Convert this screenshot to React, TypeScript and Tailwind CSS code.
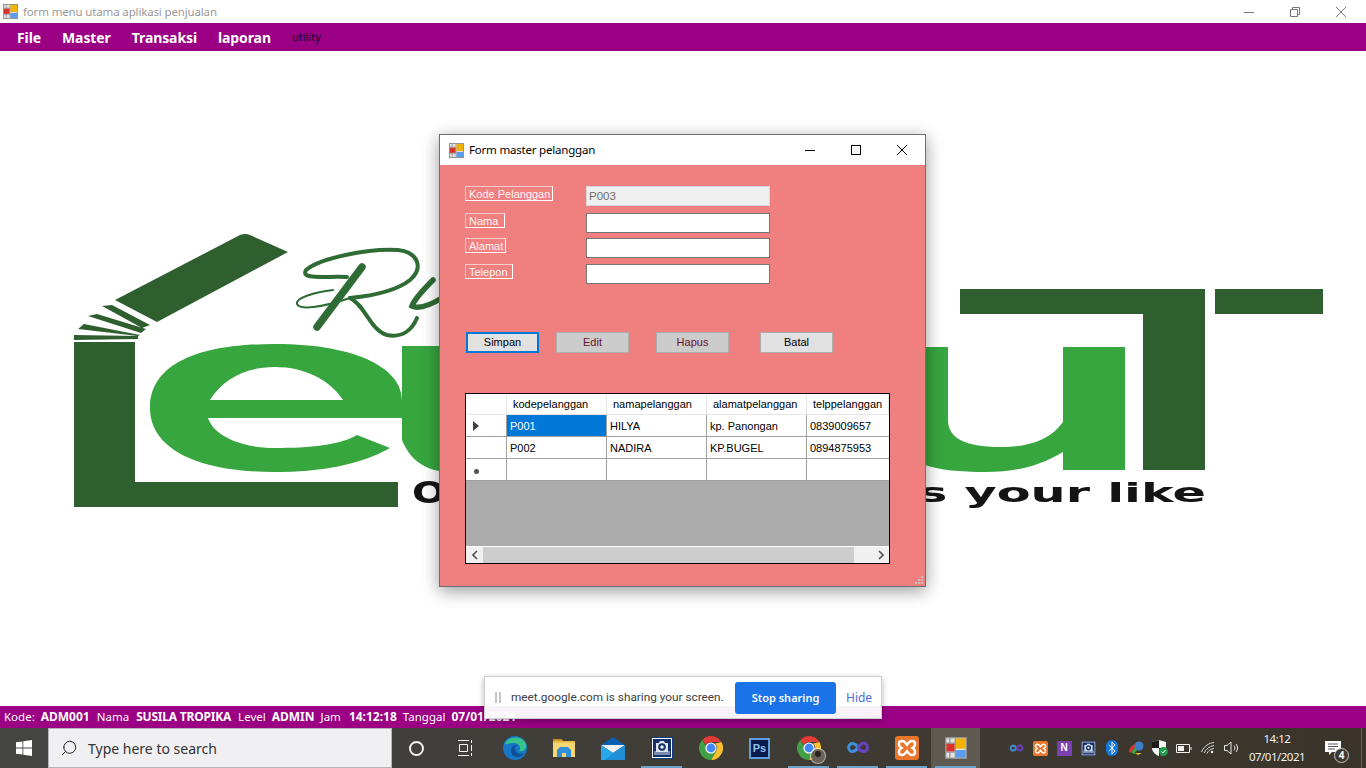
import { Search } from 'lucide-react'

const ui = "font-['Noto_Sans',sans-serif]"
const ms = "font-['Liberation_Sans',sans-serif]"

function AppIcon({ size = 16 }: { size?: number }) {
  return (
    <svg width={size} height={size} viewBox="0 0 16 16">
      <rect x="0.5" y="0.5" width="15" height="15" fill="#e4e4e4" stroke="#8f8f8f" />
      <path d="M0 4.500h7.500M0 11h7.500M3.500 0v4.500M3.500 11v5M7.500 0v16" stroke="#9a9a9a" />
      <rect x="8" y="1" width="7" height="7.500" fill="#f0b400" />
      <rect x="8" y="9.500" width="7" height="5.500" fill="#5b9cec" />
      <rect x="1" y="5" width="6" height="5.500" fill="#d8322a" />
    </svg>
  )
}

function WinButtons({ color, className, restore }: { color: string; className?: string; restore?: boolean }) {
  return (
    <div className={`flex h-full ${className ?? ''}`}>
      <div className="flex w-[46px] items-center justify-center">
        <svg width="10" height="10" fill="none" stroke={color}><path d="M0 5.500h10" /></svg>
      </div>
      <div className="flex w-[46px] items-center justify-center">
        <svg width="10" height="10" fill="none" stroke={color}>
          {restore ? (
            <path d="M.5 2.500h7v7h-7zM2.500 2.500v-2h7v7h-2" />
          ) : (
            <rect x="0.5" y="0.5" width="9" height="9" />
          )}
        </svg>
      </div>
      <div className="flex w-[46px] items-center justify-center">
        <svg width="10" height="10" fill="none" stroke={color}><path d="M0 0l10 10M10 0L0 10" /></svg>
      </div>
    </div>
  )
}

function LogoBackdrop() {
  const dark = '#2f5f2f'
  const light = '#37a63f'
  return (
    <svg className="absolute inset-0 blur-[0.6px]" width="1366" height="655" viewBox="0 51 1366 655">
      {/* roof */}
      <path d="M115 300L240 235Q245 233 250 235L288 252L157 322Z" fill={dark} />
      <path d="M102 306L112 305L150 325L142 328ZM88 316L97 314L146 329L141 333ZM78 329L84 324L140 335L138 336ZM74 335L138 336V339L74 340Z" fill={dark} />
      {/* L */}
      <path d="M74 342H135V482H398V507H74Z" fill={dark} />
      {/* e */}
      <path
        fillRule="evenodd"
        fill={light}
        d="M150 408C150 368 190 344 275 344C360 344 402 370 402 400V418H208C215 438 245 448 275 448C310 448 340 445 357 435L390 448C360 465 320 472 275 472C190 472 150 445 150 408ZM210 400H343C330 380 305 367 275 367C245 367 222 380 210 400Z"
      />
      <path d="M402 346H445V472C425 470 410 460 402 440Z" fill={light} />
      {/* script */}
      <g fill="none" stroke="#2f6b35" strokeLinecap="round">
        <path d="M347 277C325 276 300 280 306 270C320 258 370 248 398 250C418 252 424 268 410 280C395 292 370 296 350 298" strokeWidth="4" />
        <path d="M362 267L317 327" strokeWidth="7.500" />
        <path d="M350 298C365 305 370 330 387 335C402 338 412 330 417 318" strokeWidth="4" />
        <path d="M333 290C315 292 295 298 297 304C300 310 320 308 350 298" strokeWidth="2" />
        <path d="M433 280C425 288 415 298 412 306C420 310 432 304 442 298" strokeWidth="5.500" />
      </g>
      {/* right side */}
      <path d="M925 347H948V420C948 438 965 447 1000 447C1030 447 1050 440 1063 422V347H1125V470H1063V452C1040 466 1015 472 985 472C960 472 940 470 925 465Z" fill={light} />
      <path d="M960 289H1205V470H1143V314H960ZM1215 289H1323V314H1215Z" fill={dark} />
      <text x="412" y="503" fontFamily="DejaVu Sans" fontWeight="700" fontSize="31" fill="#141414" textLength="34" lengthAdjust="spacingAndGlyphs">O</text>
      <text x="918" y="502" fontFamily="DejaVu Sans" fontWeight="700" fontSize="27" fill="#141414" textLength="288" lengthAdjust="spacingAndGlyphs">s your like</text>
    </svg>
  )
}

function FieldLabel({ text, width }: { text: string; width: string }) {
  return (
    <div className={`h-[15px] shrink-0 whitespace-nowrap border border-white border-l-[#f6cccc] border-t-[#f6cccc] pl-[3px] text-[11px] leading-[15px] text-[#fff4f4] ${width}`}>
      {text}
    </div>
  )
}

function FieldRow({ label, labelWidth, value, disabled, className }: { label: string; labelWidth: string; value?: string; disabled?: boolean; className?: string }) {
  return (
    <div className={`flex items-start ${className ?? ''}`}>
      <div className="w-[121px] shrink-0">
        <FieldLabel text={label} width={labelWidth} />
      </div>
      <div
        className={`h-[20px] w-[184px] border pl-[2px] text-[11.5px] leading-[18px] ${
          disabled ? 'border-[#d8d8d8] bg-[#efefef] text-[#6d6d6d]' : 'border-[#757575] bg-white text-black'
        }`}
      >
        {value}
      </div>
    </div>
  )
}

function FormButton({ text, tone, className }: { text: string; tone: 'focus' | 'off' | 'on'; className?: string }) {
  const cls =
    tone === 'focus'
      ? 'border-2 border-[#0078d7] bg-[#e1e1e1] text-black'
      : tone === 'off'
        ? 'border border-[#adadad] bg-[#cccccc] text-[#6b0f2b]'
        : 'border border-[#adadad] bg-[#e1e1e1] text-black'
  return (
    <div className={`flex h-[21px] w-[73px] items-center justify-center text-[11px] ${cls} ${className ?? ''}`}>{text}</div>
  )
}

const rows = [
  { kode: 'P001', nama: 'HILYA', alamat: 'kp. Panongan', telp: '0839009657', mark: 'arrow' },
  { kode: 'P002', nama: 'NADIRA', alamat: 'KP.BUGEL', telp: '0894875953', mark: '' },
  { kode: '', nama: '', alamat: '', telp: '', mark: 'star' },
]

function GridTable() {
  const headCell = 'h-[21px] border-r border-b border-[#e6e6e6] bg-white pl-[6px] text-[11px] leading-[20px] text-black'
  const cell = 'h-[22px] border-r border-b border-[#a0a0a0] bg-white pl-[3px] text-[11px] leading-[22px] text-black'
  return (
    <div className="flex h-[171px] w-[425px] flex-col overflow-hidden border border-black bg-[#ababab]">
      <div className="grid grid-cols-[41px_100px_100px_100px_82px]">
        <div className={headCell} />
        <div className={headCell}>kodepelanggan</div>
        <div className={headCell}>namapelanggan</div>
        <div className={headCell}>alamatpelanggan</div>
        <div className={headCell}>telppelanggan</div>
        {rows.map((r, i) => (
          <div key={i} className="contents">
            <div className="flex h-[22px] items-center border-r border-b border-[#a0a0a0] bg-white pl-[7px]">
              {r.mark === 'arrow' && (
                <svg width="6" height="10"><path d="M0 0L6 5L0 10Z" fill="#404040" /></svg>
              )}
              {r.mark === 'star' && <div className="ml-[1px] mt-[3px] h-[5px] w-[5px] rounded-full bg-[#505050]" />}
            </div>
            <div className={i === 0 ? 'h-[22px] border-r border-b border-[#a0a0a0] bg-[#0078d7] pl-[3px] text-[11px] leading-[22px] text-white' : cell}>{r.kode}</div>
            <div className={cell}>{r.nama}</div>
            <div className={cell}>{r.alamat}</div>
            <div className={`${cell} border-r-0`}>{r.telp}</div>
          </div>
        ))}
      </div>
      <div className="flex-1" />
      <div className="flex h-[17px] items-center border-t border-white bg-[#f0f0f0]">
        <div className="flex w-[17px] items-center justify-center">
          <svg width="6" height="10" fill="none" stroke="#505050" strokeWidth="1.600"><path d="M5 1L1 5L5 9" /></svg>
        </div>
        <div className="h-full w-[371px] bg-[#cdcdcd]" />
        <div className="flex-1" />
        <div className="flex w-[17px] items-center justify-center">
          <svg width="6" height="10" fill="none" stroke="#505050" strokeWidth="1.600"><path d="M1 1L5 5L1 9" /></svg>
        </div>
      </div>
    </div>
  )
}

function FormDialog() {
  return (
    <div className={`absolute left-[439px] top-[83px] h-[453px] w-[487px] border border-[#707070] bg-[#f08080] shadow-[0_4px_16px_rgba(0,0,0,0.4)] ${ms}`}>
      <div className="flex h-[30px] items-center bg-white pl-[9px]">
        <AppIcon size={15} />
        <span className={`ml-[5px] text-[11.5px] tracking-[-0.2px] text-black ${ui}`}>Form master pelanggan</span>
        <WinButtons color="#000000" className="ml-auto" />
      </div>
      <div className="pl-[25px] pt-[21px]">
        <FieldRow label="Kode Pelanggan" labelWidth="w-[88px]" value="P003" disabled />
        <FieldRow label="Nama" labelWidth="w-[40px]" className="mt-[7px]" />
        <FieldRow label="Alamat" labelWidth="w-[41px]" className="mt-[5px]" />
        <FieldRow label="Telepon" labelWidth="w-[48px]" className="mt-[6px]" />
        <div className="ml-[1px] mt-[48px] flex">
          <FormButton text="Simpan" tone="focus" />
          <FormButton text="Edit" tone="off" className="ml-[17px]" />
          <FormButton text="Hapus" tone="off" className="ml-[27px]" />
          <FormButton text="Batal" tone="on" className="ml-[31px]" />
        </div>
        <div className="mt-[40px]">
          <GridTable />
        </div>
      </div>
      {/* size grip */}
      <svg className="absolute bottom-[1px] right-[1px]" width="9" height="9" fill="#c9bcbc">
        <path d="M6 0h2v2H6zM3 3h2v2H3zM6 3h2v2H6zM0 6h2v2H0zM3 6h2v2H3zM6 6h2v2H6z" />
      </svg>
    </div>
  )
}

function MeetBar() {
  return (
    <div className={`absolute left-[484px] top-[676px] flex h-[43px] w-[398px] items-center border border-[#cfcfcf] bg-white/95 shadow-[0_2px_6px_rgba(0,0,0,0.3)] ${ui}`}>
      <div className="ml-[10px] flex gap-[2px]">
        <div className="h-[11px] w-[2px] bg-[#c4c4c4]" />
        <div className="h-[11px] w-[2px] bg-[#c4c4c4]" />
      </div>
      <span className="ml-[10px] whitespace-nowrap font-['Roboto',sans-serif] text-[11.8px] text-[#3c4043]">meet.google.com is sharing your screen.</span>
      <div className="absolute left-[250px] top-[5px] flex h-[32px] w-[101px] items-center justify-center rounded-[3px] bg-[#1a73e8] text-[11px] font-semibold text-white">
        Stop sharing
      </div>
      <span className="absolute left-[361px] text-[12px] text-[#4a6fdc]">Hide</span>
    </div>
  )
}

function ChromeIcon({ size = 24 }: { size?: number }) {
  return (
    <svg width={size} height={size} viewBox="0 0 24 24">
      <path d="M12 0A12 12 0 0 1 22.400 6H12A6 6 0 0 0 6.800 9L3.200 3.900A12 12 0 0 1 12 0Z" fill="#e53935" />
      <path d="M22.400 6A12 12 0 0 1 12 24L17.200 15A6 6 0 0 0 16 7.500Z" fill="#fbc02d" />
      <path d="M12 24A12 12 0 0 1 3.200 3.900L8 12A6 6 0 0 0 17.200 15Z" fill="#43a047" />
      <circle cx="12" cy="12" r="5.600" fill="#fff" />
      <circle cx="12" cy="12" r="4.400" fill="#4285f4" />
    </svg>
  )
}

function CamIcon({ size = 22 }: { size?: number }) {
  return (
    <svg width={size} height={size} viewBox="0 0 22 22">
      <rect x="0.5" y="0.5" width="21" height="21" fill="#fff" stroke="#123a7a" />
      <rect x="2" y="2" width="18" height="18" fill="#142f6a" />
      <path d="M3 14h16v4H3z" fill="#dfe6f2" opacity="0.5" />
      <path d="M5 6h3l1-2h4l1 2h3v9H5z" fill="#dfe6f2" />
      <circle cx="11" cy="10" r="3.800" fill="#142f6a" />
      <circle cx="11" cy="10" r="1.700" fill="#fff" />
    </svg>
  )
}

function XamppIcon({ size = 24 }: { size?: number }) {
  return (
    <svg width={size} height={size} viewBox="0 0 24 24">
      <rect width="24" height="24" rx="3" fill="#e8762c" />
      <path d="M7 5C3 5 3 10 6.500 12C3 14 3 19 7 19C10 19 11 16 12 15C13 16 14 19 17 19C21 19 21 14 17.500 12C21 10 21 5 17 5C14 5 13 8 12 9C11 8 10 5 7 5Z" fill="none" stroke="#fff" strokeWidth="2.400" />
    </svg>
  )
}

function InfinityIcon({ width = 24 }: { width?: number }) {
  return (
    <svg width={width} height={width * 0.55} viewBox="0 0 24 13" fill="none" strokeWidth="3">
      <path d="M12 6.500C9 2 6 2 4.500 3C2 4.500 2 8.500 4.500 10C7 11 10 9.500 12 6.500" stroke="#3f8fd8" />
      <path d="M12 6.500C15 2 18 1 20 3C22 4.500 22 8.500 19.500 10C17 11 14 9.500 12 6.500" stroke="#6a3fc0" />
    </svg>
  )
}

const taskIcons = [
  {
    key: 'edge',
    node: (
      <svg width="24" height="24" viewBox="0 0 24 24">
        <circle cx="12" cy="12" r="12" fill="#1677c8" />
        <path d="M2 8C5 0 19 -1 23 8C24.500 13 20 16 16 15C19 12 16 7 11 7C6 7 3 9 2 8Z" fill="#37c48c" />
        <path d="M8 15C8 10 12 8 15 9.500C12 9.500 11 12 12 14.500C13.500 18 18 19 21 17C18 23 8 22 8 15Z" fill="#0f4f96" />
      </svg>
    ),
  },
  {
    key: 'explorer',
    node: (
      <svg width="22" height="20" viewBox="0 0 22 20">
        <path d="M0 1h8l2 2h12v16H0z" fill="#e8c14c" />
        <path d="M0 1h8l2 2H0z" fill="#c8921c" />
        <rect x="0" y="5" width="22" height="14" fill="#f7d774" />
        <path d="M4 19v-7l3-3h8l3 3v7h-5v-4H9v4z" fill="#2f8fdc" />
      </svg>
    ),
  },
  {
    key: 'mail',
    node: (
      <svg width="24" height="24" viewBox="0 0 24 24">
        <path d="M12 1L24 9H0Z" fill="#0a5fb0" />
        <path d="M0 9H24L12 17Z" fill="#eef2f8" />
        <path d="M0 9L12 17L24 9V24H0Z" fill="#28a8ea" />
        <path d="M12 17L24 9V24H4Z" fill="#1f8fd8" />
      </svg>
    ),
  },
  { key: 'cam', node: <CamIcon />, underline: true },
  { key: 'chrome', node: <ChromeIcon /> },
  {
    key: 'ps',
    node: (
      <div className="flex h-[21px] w-[21px] items-center justify-center border-2 border-[#5f9fe0] bg-[#0b1a4a] font-['Liberation_Sans',sans-serif] text-[11px] font-bold text-[#8fc4f4]">
        Ps
      </div>
    ),
  },
  {
    key: 'chrome2',
    node: (
      <div className="relative">
        <ChromeIcon />
        <div className="absolute -bottom-[3px] -right-[4px] h-[14px] w-[14px] rounded-full bg-[#6a6258] ring-1 ring-white/60">
          <div className="mx-auto mt-[2px] h-[6px] w-[6px] rounded-full bg-[#2a221c]" />
        </div>
      </div>
    ),
    underline: true,
  },
  { key: 'inf', node: <InfinityIcon />, underline: true },
  { key: 'xampp', node: <XamppIcon />, underline: true },
  { key: 'app', node: <AppIcon size={22} />, underline: true, active: true },
]

function Taskbar() {
  return (
    <div className={`flex h-[40px] items-stretch bg-gradient-to-r from-[#454543] to-[#3a342a] ${ui}`}>
      <div className="flex w-[48px] items-center justify-center">
        <svg width="16" height="16" viewBox="0 0 16 16" fill="#fff">
          <path d="M0 2.300L6.500 1.400V7.600H0ZM7.300 1.300L16 0V7.600H7.300ZM0 8.400H6.500V14.600L0 13.700ZM7.300 8.400H16V16L7.300 14.700Z" />
        </svg>
      </div>
      <div className="flex w-[344px] items-center border border-[#b5b5b5] bg-[#f0f0f2] pl-[11px]">
        <Search size={18} strokeWidth={1.3} color="#222" className="-scale-x-100" />
        <span className="ml-[10px] text-[14px] text-[#333]">Type here to search</span>
      </div>
      <div className="flex w-[49px] items-center justify-center">
        <div className="h-[15px] w-[15px] rounded-full border-2 border-[#f2f2f2]" />
      </div>
      <div className="flex w-[49px] items-center justify-center">
        <svg width="15" height="16" viewBox="0 0 15 16" fill="none" stroke="#f2f2f2">
          <path d="M0 .5h11M0 15.500h11M1.500 4.500h8v7h-8zM13.500 0v3M13.500 5v6M13.500 13v3" />
        </svg>
      </div>
      {taskIcons.map(t => (
        <div key={t.key} className={`relative flex w-[49px] items-center justify-center ${t.active ? 'bg-[#5e5a50]' : ''}`}>
          {t.node}
          {t.underline && <div className="absolute inset-x-[4px] bottom-0 h-[2px] bg-[#6aa4cc]" />}
        </div>
      ))}
      <div className="ml-auto flex items-center">
        {/* tray */}
        <div className="flex w-[24px] justify-center"><InfinityIcon width={15} /></div>
        <div className="flex w-[24px] justify-center"><XamppIcon size={15} /></div>
        <div className="flex w-[24px] justify-center">
          <div className="flex h-[15px] w-[15px] items-center justify-center bg-[#7a3fb0] font-['Liberation_Sans',sans-serif] text-[10px] font-bold leading-none text-white">N</div>
        </div>
        <div className="flex w-[24px] justify-center"><CamIcon size={15} /></div>
        <div className="flex w-[24px] justify-center">
          <svg width="12" height="16" viewBox="0 0 12 16">
            <rect width="12" height="16" rx="6" fill="#1478e0" />
            <path d="M3 5l6 6-3 3V2l3 3-6 6" fill="none" stroke="#fff" />
          </svg>
        </div>
        <div className="flex w-[24px] justify-center">
          <svg width="16" height="14" viewBox="0 0 16 14">
            <path d="M1 11C1 6 5 3 9 3L8 7C6 7 4 9 4 12Z" fill="#d8342c" />
            <path d="M4 12C4 9 6 7 8 7L9 10C8 10 7 11 7 13Z" fill="#3aa83c" />
            <circle cx="11" cy="5" r="4.500" fill="#3a7fc8" />
            <path d="M7 12H14L10 14Z" fill="#e8c020" />
          </svg>
        </div>
        <div className="flex w-[24px] justify-center">
          <svg width="16" height="16" viewBox="0 0 16 16">
            <path d="M7 0L14 2V8C14 12 10 15 7 16C4 15 0 12 0 8V2Z" fill="#f4f4f4" />
            <path d="M7 0V8H0V2ZM7 8H14C14 12 10 15 7 16Z" fill="#1b1b1b" />
            <circle cx="11.500" cy="11.500" r="4.500" fill="#1f9a4a" />
            <path d="M9.500 11.500l1.500 1.500 2.500-3" fill="none" stroke="#fff" />
          </svg>
        </div>
        <div className="flex w-[24px] justify-center">
          <svg width="16" height="9" viewBox="0 0 16 9" fill="none" stroke="#f2f2f2">
            <path d="M.5.500h13v8h-13zM15 3v3" />
            <rect x="2" y="2" width="6" height="5" fill="#f2f2f2" stroke="none" />
          </svg>
        </div>
        <div className="flex w-[24px] justify-center">
          <svg width="14" height="12" viewBox="0 0 14 12" fill="none" stroke="#d8d8d8">
            <path d="M.5 10C3 4 8 1 13 .5M3 11C5 7 8 4.500 13 3.500M6 11.500C7 9 9 7 13 6.500" />
            <circle cx="11" cy="10" r="1.200" fill="#f2f2f2" stroke="none" />
          </svg>
        </div>
        <div className="flex w-[24px] justify-center">
          <svg width="16" height="14" viewBox="0 0 16 14" fill="none" stroke="#e8e8e8">
            <path d="M.5 4.500h2.500L7 1v12L3 9.500H.5zM10 4.500c1.200 1.500 1.200 3.500 0 5M12 3c2 2.500 2 5.500 0 8" />
          </svg>
        </div>
        <div className="flex w-[66px] flex-col items-center text-[11.5px] leading-[18px] tracking-[-0.5px] text-[#f2f2f2]">
          <span>14:12</span>
          <span>07/01/2021</span>
        </div>
        <div className="flex w-[46px] justify-center">
          <div className="relative">
            <svg width="16" height="15" viewBox="0 0 16 15" fill="#fff">
              <path d="M0 0H16V11H7L4 14V11H0Z" />
              <path d="M3 3h10M3 5.500h10M3 8h7" stroke="#555" />
            </svg>
            <div className="absolute -bottom-[7px] -right-[8px] flex h-[15px] w-[15px] items-center justify-center rounded-full border border-[#c8c8c8] bg-[#3e3a32] text-[10px] font-bold text-white">
              4
            </div>
          </div>
        </div>
        <div className="w-[5px]" />
        <div className="h-full w-[5px] border-l border-[#6a655c]" />
      </div>
    </div>
  )
}

export default function App() {
  return (
    <div className="relative flex h-[768px] w-[1366px] flex-col overflow-hidden bg-white">
      {/* TITLE BAR */}
      <div className={`flex h-[23px] items-center pl-[3px] ${ui}`}>
        <AppIcon size={15} />
        <span className="ml-[5px] text-[11.5px] tracking-[-0.15px] text-[#999999]">form menu utama aplikasi penjualan</span>
        <WinButtons color="#777777" restore className="ml-auto pr-[2px]" />
      </div>

      {/* MENU */}
      <div className={`flex h-[28px] items-center bg-[#9b0084] pl-[17px] text-[14px] font-bold tracking-[-0.1px] text-white ${ui}`}>
        <span>File</span>
        <span className="ml-[21px]">Master</span>
        <span className="ml-[21px]">Transaksi</span>
        <span className="ml-[21px]">laporan</span>
        <span className="ml-[21px] text-[11px] font-normal tracking-normal text-[#12002e]">utility</span>
      </div>

      {/* MAIN */}
      <div className="relative flex-1 bg-white">
        <LogoBackdrop />
        <FormDialog />
      </div>

      {/* STATUS */}
      <div className={`flex h-[22px] items-center bg-[#9b0084] pl-[4px] text-[11.5px] text-white ${ui}`}>
        <span>Kode:</span>
        <b className="ml-[6px] text-[12px]">ADM001</b>
        <span className="ml-[7px]">Nama</span>
        <b className="ml-[7px] text-[12px] tracking-[-0.2px]">SUSILA TROPIKA</b>
        <span className="ml-[7px]">Level</span>
        <b className="ml-[6px] text-[12px]">ADMIN</b>
        <span className="ml-[6px]">Jam</span>
        <b className="ml-[8px] text-[12px]">14:12:18</b>
        <span className="ml-[6px]">Tanggal</span>
        <b className="ml-[6px] text-[12px]">07/01/2021</b>
      </div>

      <Taskbar />
      <MeetBar />
    </div>
  )
}
